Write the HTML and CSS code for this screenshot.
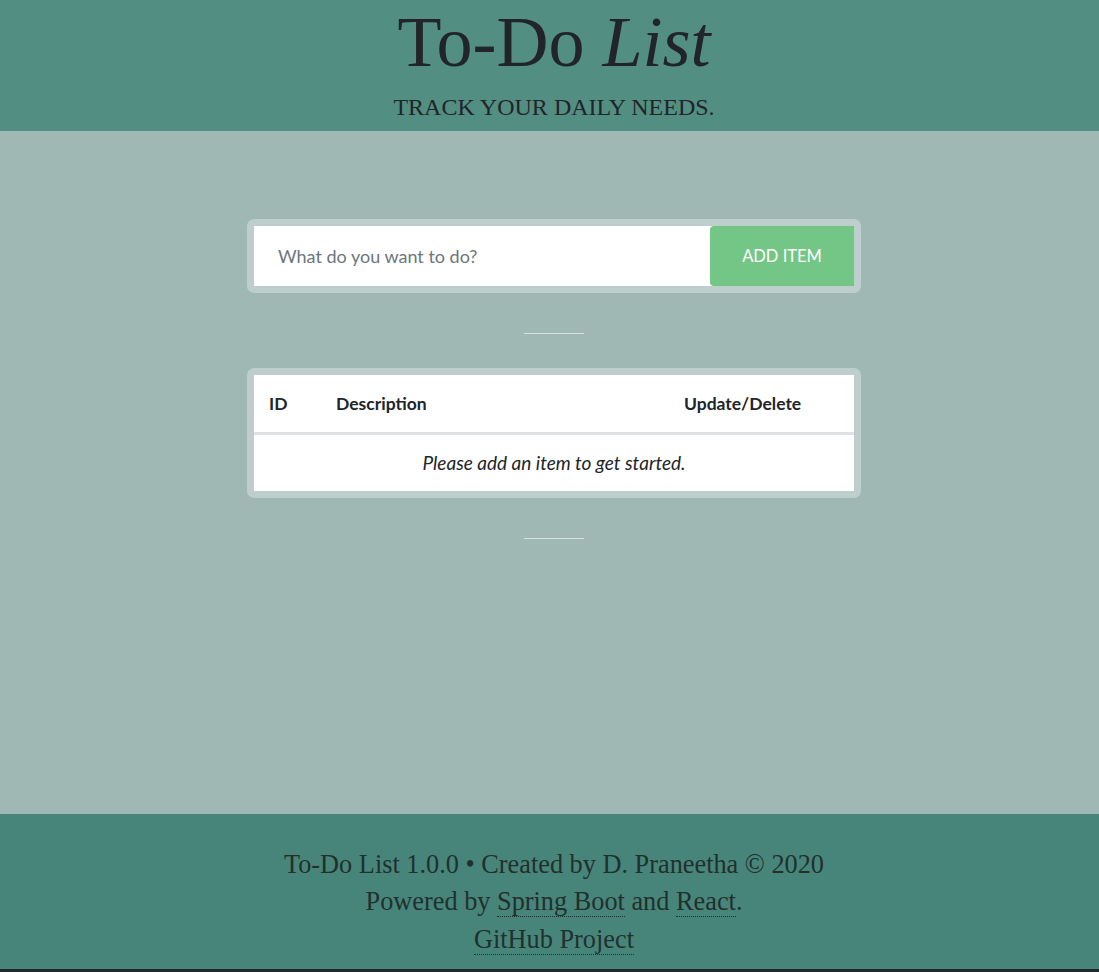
FILE: index.html
```html
<!DOCTYPE html>
<html lang="en">
<head>
<meta charset="utf-8">
<title>To-Do List</title>
<link rel="stylesheet" href="styles.css">
</head>
<body>
<header class="masthead">
  <h1 class="title">To-Do <em>List</em></h1>
  <p class="subtitle">TRACK YOUR DAILY NEEDS.</p>
</header>
<main class="content">
  <form class="panel add-form">
    <input class="add-input" type="text" placeholder="What do you want to do?">
    <button class="add-btn" type="button">ADD ITEM</button>
  </form>
  <hr class="divider">
  <div class="panel">
    <table class="todo-table">
      <thead>
        <tr>
          <th class="col-id">ID</th>
          <th class="col-desc">Description</th>
          <th class="col-act">Update/Delete</th>
        </tr>
      </thead>
      <tbody>
        <tr><td class="empty" colspan="3">Please add an item to get started.</td></tr>
      </tbody>
    </table>
  </div>
  <hr class="divider">
</main>
<footer class="footer">
  <p class="foot-line">To-Do List 1.0.0 • Created by D. Praneetha © 2020</p>
  <p class="foot-line">Powered by <a class="foot-link" href="#">Spring Boot</a> and <a class="foot-link" href="#">React</a>.</p>
  <p class="foot-line"><a class="foot-link" href="#">GitHub Project</a></p>
</footer>
</body>
</html>
```
FILE: styles.css
```css
* { box-sizing: border-box; }
html, body { margin: 0; padding: 0; }
body {
  min-height: 100vh;
  display: flex;
  flex-direction: column;
  background: #9fb8b3;
  color: #212529;
  font-family: "Liberation Serif", "DejaVu Serif", serif;
}
.masthead {
  background: #538e83;
  height: 131px;
  text-align: center;
  padding-left: 9px;
}
.title {
  margin: 0;
  font-size: 72px;
  font-weight: 400;
  line-height: 84px;
  color: #212529;
}
.title em { font-style: italic; }
.subtitle {
  margin: 8px 0 0;
  font-size: 24px;
  line-height: 30px;
  color: #212529;
}
.content {
  flex: 1;
  display: flex;
  flex-direction: column;
  align-items: center;
  padding-top: 88px;
  padding-left: 9px;
}
.panel {
  width: 614px;
  background: #bdcecc;
  border-radius: 7px;
  padding: 7px;
}
.add-form {
  display: flex;
  margin: 0;
}
.add-input {
  flex: 1;
  height: 60px;
  border: none;
  outline: none;
  background: #fff;
  padding: 0 24px;
  font-family: "Lato", "Open Sans", sans-serif;
  font-size: 18px;
  color: #495057;
}
.add-input::placeholder { color: #6c757d; }
.add-btn {
  width: 144px;
  height: 60px;
  border: none;
  border-radius: 4px 0 0 4px;
  background: #74c687;
  color: #fff;
  font-family: "Lato", "Open Sans", sans-serif;
  font-size: 16.5px;
  margin-left: -3px;
}
.divider {
  width: 60px;
  height: 0;
  border: none;
  border-top: 1px solid #d6e2df;
  margin: 40px 0 34px;
}
.todo-table {
  width: 600px;
  border-collapse: collapse;
  background: #fff;
  font-family: "Lato", "Open Sans", sans-serif;
  font-size: 17.5px;
  color: #212529;
  table-layout: fixed;
}
.todo-table th {
  text-align: left;
  font-weight: 700;
  height: 58px;
  padding: 0 15px;
  border-bottom: 3px solid #dee2e6;
}
.col-id { width: 67px; }
.col-desc { width: 348px; }
.col-act { width: 185px; }
.empty {
  height: 58px;
  text-align: center;
  font-style: italic;
  font-size: 19px;
  padding: 0;
}
.footer {
  background: #47857a;
  border-bottom: 3px solid #23282a;
  padding: 32px 0 11px 9px;
  text-align: center;
}
.foot-line {
  margin: 0;
  font-size: 26.3px;
  line-height: 37.5px;
  color: #22302d;
}
.foot-link {
  color: #22302d;
  text-decoration: none;
  border-bottom: 1px dotted #22302d;
}
```
